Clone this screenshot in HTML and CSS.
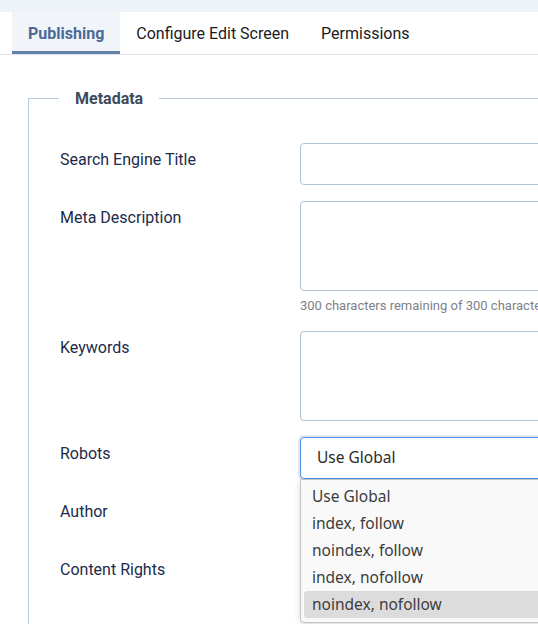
FILE: index.html
```html
<!DOCTYPE html>
<html lang="en">
<head>
<meta charset="utf-8">
<title>Publishing</title>
<link rel="stylesheet" href="styles.css">
</head>
<body>
<div class="topbar"></div>
<nav class="tabs">
  <div class="tab active">Publishing</div>
  <div class="tab">Configure Edit Screen</div>
  <div class="tab">Permissions</div>
</nav>
<main class="content">
  <fieldset class="meta">
    <legend>Metadata</legend>
    <div class="row">
      <label class="lbl">Search Engine Title</label>
      <div class="ctl"><input class="field" type="text"></div>
    </div>
    <div class="row">
      <label class="lbl">Meta Description</label>
      <div class="ctl">
        <textarea class="field area"></textarea>
        <div class="hint">300 characters remaining of 300 characters.</div>
      </div>
    </div>
    <div class="row">
      <label class="lbl">Keywords</label>
      <div class="ctl"><textarea class="field area"></textarea></div>
    </div>
    <div class="row">
      <label class="lbl">Robots</label>
      <div class="ctl select-wrap">
        <div class="field select">Use Global</div>
        <ul class="dropdown">
          <li>Use Global</li>
          <li>index, follow</li>
          <li>noindex, follow</li>
          <li>index, nofollow</li>
          <li class="hl">noindex, nofollow</li>
        </ul>
      </div>
    </div>
    <div class="row">
      <label class="lbl">Author</label>
      <div class="ctl"><input class="field" type="text"></div>
    </div>
    <div class="row">
      <label class="lbl">Content Rights</label>
      <div class="ctl"><input class="field" type="text"></div>
    </div>
  </fieldset>
</main>
</body>
</html>
```

FILE: styles.css
```css
html, body {
  margin: 0;
  padding: 0;
  overflow: hidden;
  background: #fff;
}
body {
  font-family: Roboto, "Liberation Sans", sans-serif;
  font-size: 16px;
  color: #1c2b4a;
  width: 800px;
}
.topbar {
  height: 12px;
  background: #eef3fa;
}
.tabs {
  display: flex;
  padding-left: 12px;
  border-bottom: 1px solid #dfe3e8;
  height: 42px;
}
.tab {
  padding: 1px 16px 0;
  line-height: 41px;
  color: #1b1b1b;
  white-space: nowrap;
}
.tab.active {
  background: #f1f4f8;
  color: #4b6a97;
  font-weight: 700;
  box-shadow: inset 0 -3px 0 #6282a9;
}
.content {
  padding: 34px 0 0 28px;
}
.meta {
  margin: 0;
  border: 1px solid #b9c9e0;
  border-right: none;
  border-bottom: none;
  padding: 35px 0 40px 31px;
  min-width: 0;
}
.meta legend {
  margin-left: -1px;
  padding: 0 16px;
  font-weight: 700;
  font-size: 16px;
  color: #3d4a5c;
}
.row {
  display: flex;
  margin-bottom: 16px;
}
.lbl {
  width: 240px;
  flex: none;
  padding-top: 5px;
  line-height: 24px;
}
.ctl {
  flex: 1;
  position: relative;
}
.field {
  display: block;
  box-sizing: border-box;
  width: 100%;
  height: 42px;
  margin: 0;
  border: 1px solid #b3c3da;
  border-radius: 4px;
  background: #fff;
  font: inherit;
  outline: none;
}
.area {
  height: 90px;
  resize: none;
}
.hint {
  margin-top: 5px;
  font-size: 13px;
  line-height: 19px;
  color: #7d8188;
  white-space: nowrap;
}
.select-wrap {
  z-index: 5;
}
.select {
  border-color: #4f90e8;
  box-shadow: 0 0 0 2px #e4e6ea;
  padding-left: 16px;
  line-height: 38px;
  font-family: "Noto Sans", "Open Sans", sans-serif;
  font-size: 15.5px;
  color: #2b2b2b;
}
.dropdown {
  position: absolute;
  top: 42px;
  left: 0;
  width: 300px;
  margin: 0;
  padding: 3px 0 4px 3px;
  list-style: none;
  background: #f9f9f9;
  border: 1px solid #c4c4c4;
  border-radius: 0 0 4px 4px;
  box-shadow: 0 2px 6px rgba(0,0,0,0.15);
  font-family: "Noto Sans", "Open Sans", sans-serif;
  font-size: 15.5px;
  color: #3c3c3c;
  box-sizing: border-box;
}
.dropdown li {
  height: 27px;
  line-height: 27px;
  padding-left: 8px;
  border-radius: 3px;
}
.dropdown li.hl {
  background: #dcdcdc;
}
```
